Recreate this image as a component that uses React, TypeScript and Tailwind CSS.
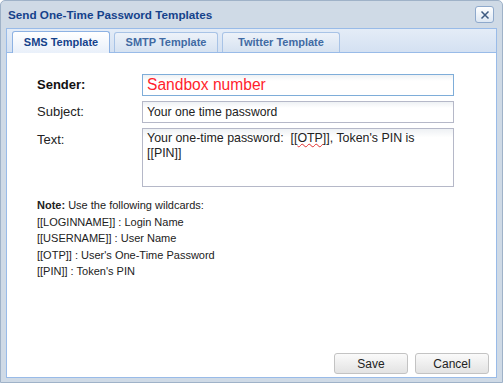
import React from "react";

const font = { fontFamily: '"Liberation Sans", Arial, sans-serif' };

export default function App() {
  return (
    <div className="w-[504px] h-[384px] bg-white" style={font}>
      <div className="w-[503px] h-[383px] flex flex-col rounded-t-[5px] border border-[#9fb2c8] bg-[#cfdae6]">
        {/* title bar */}
        <div className="h-[27px] flex items-center justify-between pl-[7px] pr-[8px]">
          <span className="text-[11.7px] font-bold text-[#15428b]">Send One-Time Password Templates</span>
          <div className="w-[19px] h-[17px] rounded-[3px] border border-[#8ea9cc] bg-gradient-to-b from-white to-[#dde7f3] flex items-center justify-center">
            <svg width="10" height="10" viewBox="0 0 10 10">
              <path d="M1.5 1.5 L8.5 8.5 M8.5 1.5 L1.5 8.5" stroke="#3d5a80" strokeWidth="1.5" />
            </svg>
          </div>
        </div>
        {/* body */}
        <div className="flex-1 mx-[5px] mb-[4px] flex flex-col border border-[#99bbe8]">
          <div className="h-[24px] bg-gradient-to-b from-[#e4ecf7] to-[#d4e1f2] border-b border-[#99bbe8] flex items-end pl-[5px] gap-[4px]">
            <div className="w-[98px] justify-center flex items-center rounded-t-[3px] border border-b-0 border-[#8db2e3] bg-gradient-to-b from-white to-[#e9f0fa] text-[11px] font-bold text-[#15428b] mb-[-1px] h-[22px]">
              SMS Template
            </div>
            <div className="w-[104px] h-[20px] justify-center flex items-center rounded-t-[3px] border border-b-0 border-[#a8c3e6] bg-gradient-to-b from-[#edf2f9] to-[#d6e2f1] text-[11px] font-bold text-[#416aa3]">
              SMTP Template
            </div>
            <div className="w-[118px] h-[20px] justify-center flex items-center rounded-t-[3px] border border-b-0 border-[#a8c3e6] bg-gradient-to-b from-[#edf2f9] to-[#d6e2f1] text-[11px] font-bold text-[#416aa3]">
              Twitter Template
            </div>
          </div>
          <div className="flex-1 bg-white flex flex-col pl-[30px] pr-[7px] pt-[21px] pb-[3px]">
            <div className="flex items-center h-[22px]">
              <div className="w-[105px] text-[13px] font-bold text-[#111]">Sender:</div>
              <div className="w-[312px] h-[22px] border border-[#7eadd9] bg-gradient-to-b from-[#eef1f4] to-white to-[30%] flex items-center pl-[4px] text-[15.6px] text-[#ff1e2d]">
                Sandbox number
              </div>
            </div>
            <div className="flex items-center h-[22px] mt-[5px]">
              <div className="w-[105px] text-[13px] text-[#222]">Subject:</div>
              <div className="w-[312px] h-[22px] border border-[#b5b8c8] bg-gradient-to-b from-[#eef1f4] to-white to-[30%] flex items-center pl-[4px] text-[12.2px] text-[#222]">
                Your one time password
              </div>
            </div>
            <div className="flex h-[59px] mt-[5px]">
              <div className="w-[105px] text-[13px] text-[#222] pt-[2px]">Text:</div>
              <div className="w-[312px] h-[59px] border border-[#b5b8c8] bg-gradient-to-b from-[#eef1f4] to-white to-[15%] pl-[4px] pt-[2px] text-[12.4px] leading-[15px] text-[#222]">
                Your one-time password:&nbsp; [[<span className="underline decoration-wavy decoration-[#e03030] decoration-1">OTP</span>]], Token's PIN is
                <br />[[PIN]]
              </div>
            </div>
            <div className="mt-[10px] text-[11px] leading-[16.5px] text-[#222]">
              <div><b>Note:</b> Use the following wildcards:</div>
              <div>[[LOGINNAME]] : Login Name</div>
              <div>[[USERNAME]] : User Name</div>
              <div>[[OTP]] : User's One-Time Password</div>
              <div>[[PIN]] : Token's PIN</div>
            </div>
            <div className="flex-1" />
            <div className="flex justify-end gap-[7px]">
              <button className="w-[74px] h-[21px] rounded-[3px] border border-[#c3c3c3] bg-gradient-to-b from-[#fafafa] to-[#e3e3e3] text-[12px] text-[#222]">Save</button>
              <button className="w-[74px] h-[21px] rounded-[3px] border border-[#c3c3c3] bg-gradient-to-b from-[#fafafa] to-[#e3e3e3] text-[12px] text-[#222]">Cancel</button>
            </div>
          </div>
        </div>
      </div>
    </div>
  );
}
